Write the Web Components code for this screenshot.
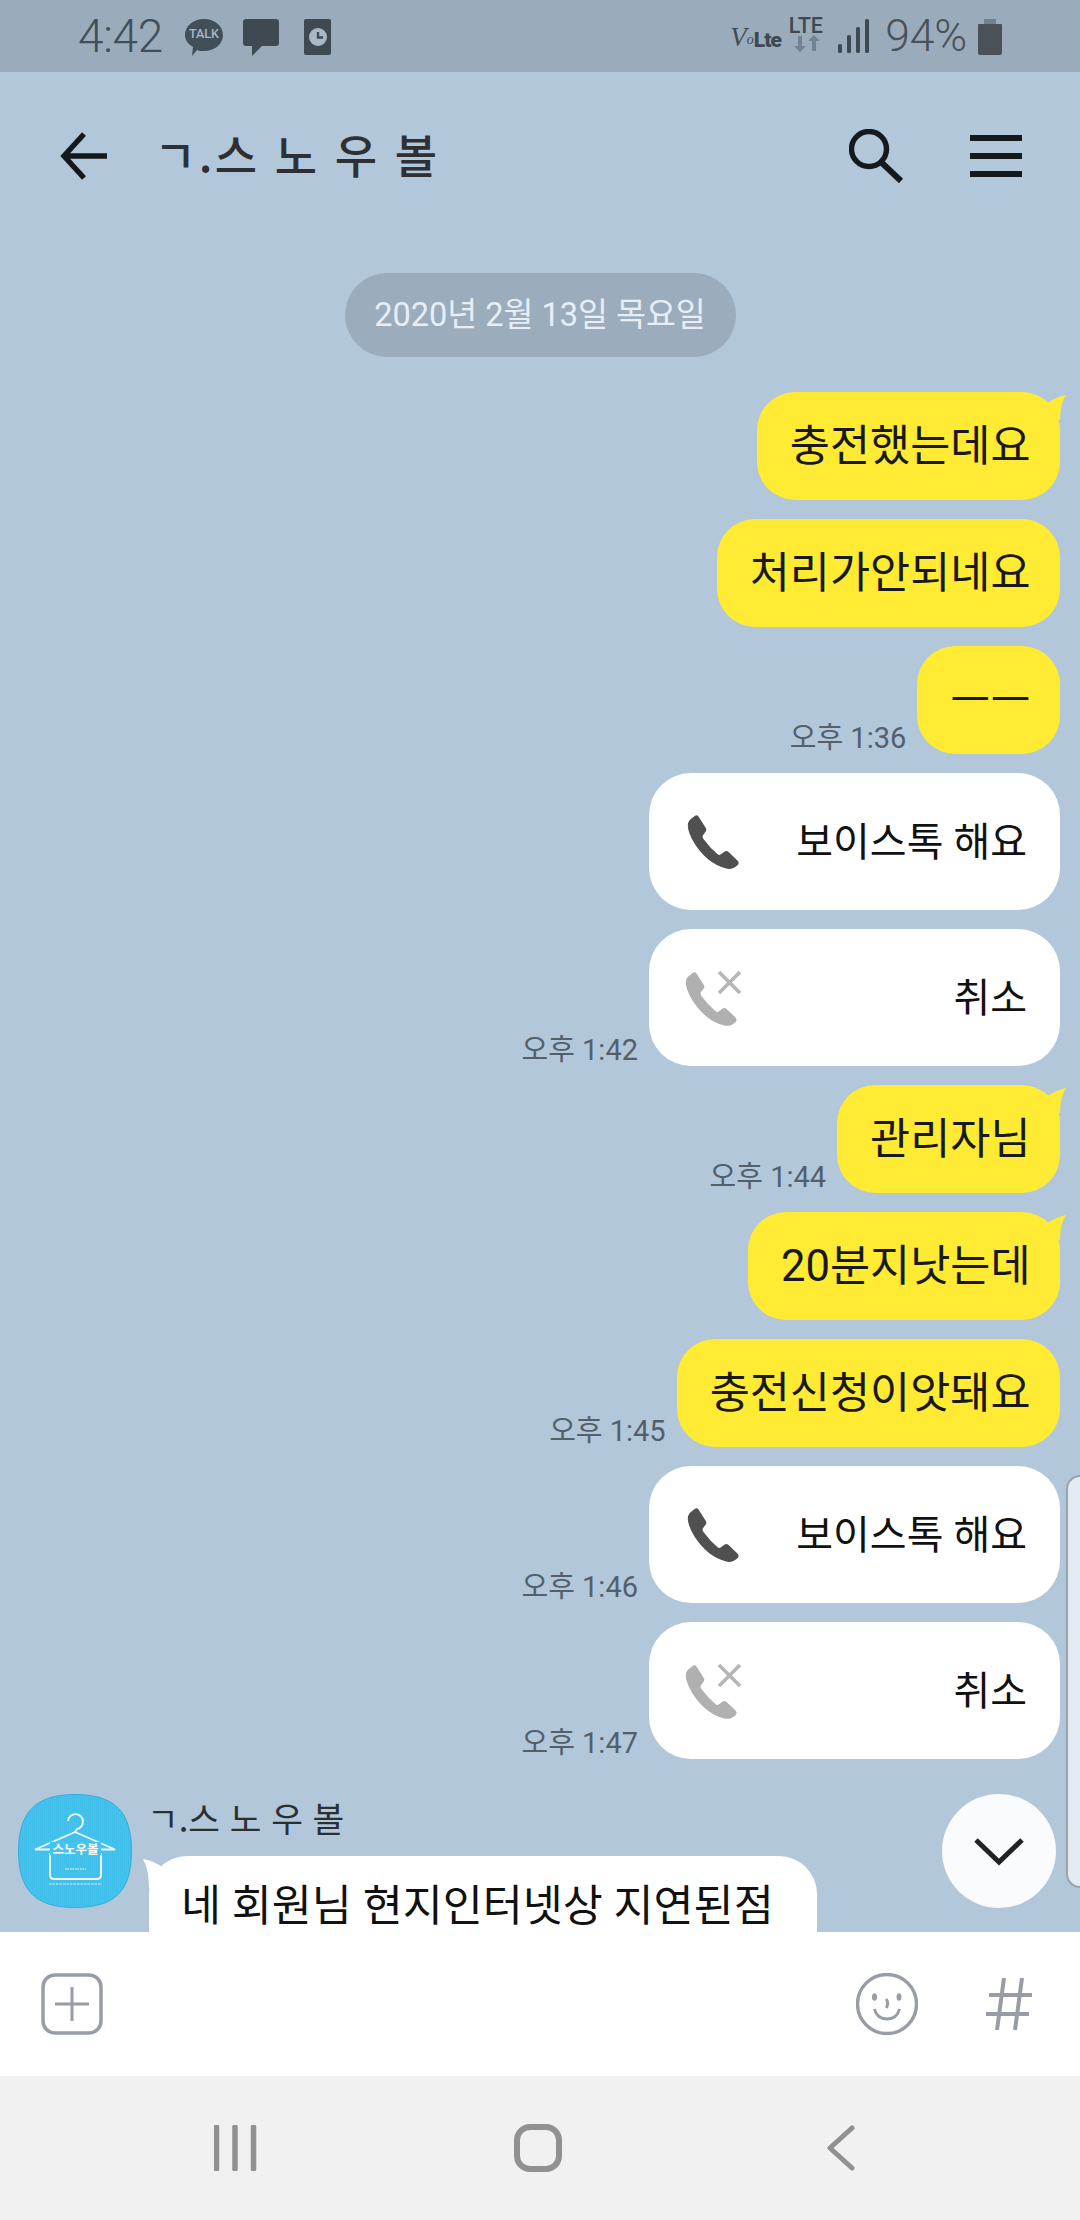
<!DOCTYPE html>
<html lang="ko"><head><meta charset="utf-8"><title>ㄱ.스노우볼</title>
<style>
html,body{margin:0;padding:0;width:1080px;height:2220px;overflow:hidden}
body{font-family:Roboto,"Noto Sans CJK KR",sans-serif;background:#b2c7da}
</style></head><body>
<chat-app>
  <status-bar slot="status"></status-bar>
  <chat-header slot="header" title-text="ㄱ.스 노 우 볼"></chat-header>
  <date-pill slot="date">2020년 2월 13일 목요일</date-pill>
  <chat-bubble tail>충전했는데요</chat-bubble>
  <chat-bubble>처리가안되네요</chat-bubble>
  <chat-bubble time="오후 1:36">ㅡㅡ</chat-bubble>
  <call-bubble kind="voice">보이스톡 해요</call-bubble>
  <call-bubble kind="cancel" time="오후 1:42">취소</call-bubble>
  <chat-bubble tail time="오후 1:44">관리자님</chat-bubble>
  <chat-bubble tail>20분지낫는데</chat-bubble>
  <chat-bubble time="오후 1:45">충전신청이앗돼요</chat-bubble>
  <call-bubble kind="voice" time="오후 1:46">보이스톡 해요</call-bubble>
  <call-bubble kind="cancel" time="오후 1:47">취소</call-bubble>
  <incoming-message name="ㄱ.스 노 우 볼">네 회원님 현지인터넷상 지연된점</incoming-message>
  <scroll-panel slot="overlay"></scroll-panel>
  <scroll-down slot="overlay"></scroll-down>
  <input-bar slot="input"></input-bar>
  <nav-bar slot="nav"></nav-bar>
</chat-app>
<script>
function def(name, html){
  customElements.define(name, class extends HTMLElement{
    connectedCallback(){
      if(this.shadowRoot) return;
      const r=this.attachShadow({mode:'open'});
      r.innerHTML=typeof html==='function'?html(this):html;
    }
  });
}
const PHONE='M24 2Q30-1 35 5L57 40Q60 46 55 51L47 62Q46 68 50 73Q70 100 92 118Q97 122 102 118L112 110Q118 106 124 110L152 137Q158 144 152 150Q135 166 115 160Q60 145 22 85Q-8 35 8 15Z';
const FONT='Roboto,"Noto Sans CJK KR",sans-serif';

def('chat-app',`<style>
:host{display:flex;flex-direction:column;width:1080px;height:2220px;position:relative;overflow:hidden;background:#b2c7da;font-family:${FONT}}
.chat{flex:1;min-height:0;overflow:hidden;position:relative;display:flex;flex-direction:column}
.msgs{display:flex;flex-direction:column;gap:19px;padding:35px 20px 0 18px}
.date{display:flex;justify-content:center;padding-top:33px}
</style>
<slot name="status"></slot>
<div class="chat">
  <slot name="header"></slot>
  <div class="date"><slot name="date"></slot></div>
  <div class="msgs"><slot></slot></div>
  <slot name="overlay"></slot>
</div>
<slot name="input"></slot>
<slot name="nav"></slot>`);

def('status-bar',`<style>
:host{display:flex;align-items:center;height:72px;background:#9aacbc;color:#424f59;padding:0 78px 0 78px;box-sizing:border-box;justify-content:space-between;flex:none}
.g{display:flex;align-items:center}
.t{font:300 46px/72px Roboto,sans-serif;letter-spacing:-.3px}
svg{display:block;overflow:visible}
.pct{font:300 44.5px/72px Roboto,sans-serif;color:#4a5257;margin:0 11px 0 15px;letter-spacing:-.2px}
.talk{position:relative;width:40px;height:38px;margin-left:21px;margin-top:3px}
.talk span{position:absolute;left:0;right:0;top:8px;text-align:center;font:500 12.5px/14px Roboto,sans-serif;color:#a8b8c6}
.volte{display:flex;align-items:flex-end;width:50px;height:26px;color:#3f4951;white-space:nowrap;margin-top:2px}
.v{font:italic 400 27px/26px "Liberation Serif",serif}
.o{font:italic 400 14px/20px "Liberation Serif",serif}
.l{font:900 21px/20px Roboto,sans-serif;letter-spacing:-1px}
.lte{display:flex;flex-direction:column;align-items:center;width:37px;height:40px;margin-left:7px;margin-top:1px}
.lte span{font:500 21.5px/18px Roboto,sans-serif;color:#3f4951}
</style>
<div class="g">
 <span class="t">4:42</span>
 <div class="talk"><svg width="40" height="38" viewBox="0 0 40 38"><path d="M20 0C31 0 39 7 39 16S31 32 20 32C17 32 15 32 13 31L8 37L9 28C4 25 1 21 1 16C1 7 9 0 20 0Z" fill="#424f59"/></svg><span>TALK</span></div>
 <svg width="37" height="38" viewBox="0 0 37 38" style="margin-left:19px;margin-top:3px"><path d="M3 0H33Q36 0 36 3V24Q36 27 33 27H19L9 37V27H3Q0 27 0 24V3Q0 0 3 0Z" fill="#3f4951"/></svg>
 <svg width="28" height="36" viewBox="0 0 28 36" style="margin-left:24px;margin-top:2px"><rect width="27" height="36" rx="2" fill="#3f4951"/><circle cx="14" cy="18" r="9" fill="#a8b8c6"/><path d="M14 13V18.5H19" fill="none" stroke="#3f4951" stroke-width="2.4"/></svg>
</div>
<div class="g">
 <div class="volte"><span class="v">V</span><span class="o">o</span><span class="l">Lte</span></div>
 <div class="lte"><span>LTE</span><svg width="37" height="18" viewBox="0 20 37 18"><path d="M11 21H15V31H19L13 37L7 31H11Z" fill="#718290"/><path d="M25 36H29V26H33L27 20L21 26H25Z" fill="#718290"/></svg></div>
 <svg width="32" height="36" viewBox="0 0 32 36" style="margin-left:14px"><g fill="#3f4951"><rect x="0" y="26" width="4" height="9" rx="1.5"/><rect x="9" y="17" width="4" height="18" rx="1.5"/><rect x="18" y="9" width="4" height="26" rx="1.5"/><rect x="27" y="1" width="4" height="34" rx="1.5"/></g></svg>
 <span class="pct">94%</span>
 <svg width="24" height="36" viewBox="0 0 24 36" style="margin-top:1px"><rect x="6" y="0" width="12" height="6" fill="#718290"/><path d="M1 5H23Q24 5 24 6V34Q24 36 22 36H2Q0 36 0 34V6Q0 5 1 5Z" fill="#4a5257"/></svg>
</div>`);

def('chat-header',h=>`<style>
:host{display:flex;align-items:center;height:168px;flex:none;padding-left:60px;box-sizing:border-box;color:#2e3033}
svg{display:block;flex:none}
.t{font:500 46px/1 "Noto Sans CJK KR",sans-serif;letter-spacing:2.4px;margin-left:46px;flex:1;white-space:pre;position:relative;top:-3px}
.r{display:flex;align-items:center;padding-right:58px}
</style>
<svg width="48" height="48" viewBox="0 0 48 48"><path d="M24 2L4 24L24 46M4 24H47" fill="none" stroke="#16191c" stroke-width="5.4"/></svg>
<div class="t">${h.getAttribute('title-text')}</div>
<div class="r">
<svg width="55" height="54" viewBox="0 0 55 54"><circle cx="20" cy="20" r="17.5" fill="none" stroke="#16191c" stroke-width="5.4"/><path d="M32 33L52 52" stroke="#16191c" stroke-width="6" fill="none"/></svg>
<svg width="52" height="42" viewBox="0 0 52 42" style="margin-left:66px"><path d="M0 3H52M0 21H52M0 39H52" stroke="#16191c" stroke-width="6"/></svg>
</div>`);

def('date-pill',`<style>
:host{display:flex;align-items:center;justify-content:center;width:391px;height:84px;border-radius:42px;background:#9badbc;color:#e8eef5;font:400 32.5px/1 ${FONT};box-sizing:border-box;white-space:nowrap}
</style><slot></slot>`);

const timeEl=h=>h.getAttribute('time')?`<span class="time">${h.getAttribute('time')}</span>`:'';
const rowCss=`:host{display:flex;justify-content:flex-end;align-items:flex-end;gap:11px}
.time{font:400 29px/32px ${FONT};color:#53606c;white-space:nowrap}`;

def('chat-bubble',h=>`<style>${rowCss}
.b{position:relative;height:108px;box-sizing:border-box;padding:2px 29.5px 0 33px;border-radius:38px;background:#ffeb33;color:#191919;display:flex;align-items:center;font:400 43.6px/1 ${FONT};white-space:nowrap}
.b svg{position:absolute;left:100%;margin-left:-20px;top:0}
</style>${timeEl(h)}<div class="b"><slot></slot>${h.hasAttribute('tail')?'<svg width="28" height="30" viewBox="0 0 28 30"><path d="M6 12Q16 5 26 3Q20 12 20 28L6 28Z" fill="#ffeb33"/></svg>':''}</div>`);

def('call-bubble',h=>{
 const cancel=h.getAttribute('kind')==='cancel';
 const icon=cancel
  ?`<svg width="58" height="56" viewBox="0 0 58 56"><path transform="translate(0 2) scale(.333)" d="${PHONE}" fill="#b0b0b0"/><path d="M34 2L55 23M55 2L34 23" stroke="#b6b6b6" stroke-width="3.6" fill="none"/></svg>`
  :`<svg width="52" height="54" viewBox="0 0 156 162"><path d="${PHONE}" fill="#505050"/></svg>`;
 return `<style>${rowCss}
.b{width:411px;height:137px;box-sizing:border-box;border-radius:42px;background:#fff;color:#111;display:flex;align-items:center;justify-content:space-between;padding:0 33px 0 ${cancel?36:38}px;font:400 40px/1 ${FONT};white-space:nowrap}
.b span{padding-top:2px}
svg{display:block;flex:none}
</style>${timeEl(h)}<div class="b">${icon}<span><slot></slot></span></div>`;
});

def('incoming-message',h=>`<style>
:host{display:flex;margin:16px 0 0 0;gap:17px;align-items:flex-start}
svg{display:block;flex:none}
.c{display:flex;flex-direction:column;min-width:0}
.n{height:62px;font:400 34.5px/47px "Noto Sans CJK KR",sans-serif;color:#2a2f34;white-space:pre;margin-left:-2px}
.wrap{position:relative;width:668px}
.b{background:#fff;border-radius:38px;padding:24px 32px 40px;color:#111;font:400 43.5px/54px ${FONT};white-space:nowrap}
.tail{position:absolute;left:-8px;top:0}
</style>
<svg width="114" height="114" viewBox="0 0 114 114"><defs><pattern id="st" width="2" height="4" patternUnits="userSpaceOnUse"><rect width="1" height="4" fill="#3bb6e6"/></pattern></defs><path d="M57 .5C97 .5 113.500 18 113.500 57C113.500 97 97 113.500 57 113.500C18 113.500 .5 97 .5 57C.5 18 18 .5 57 .5Z" fill="#43c4ee" stroke="#33aed9"/><path d="M57 1C97 1 113 18 113 57C113 97 97 113 57 113C18 113 1 97 1 57C1 18 18 1 57 1Z" fill="url(#st)" opacity=".35"/>
<g fill="none" stroke="#eefaff" stroke-width="1.900"><path d="M50 27A7.500 7.500 0 1 1 59 35L57 38L17 55.500H32M57 38L97 55.500H82"/><path d="M32 59V81Q32 85 36 85H79Q83 85 83 81V59"/></g>
<rect x="32" y="48" width="51" height="13" fill="#43c4ee"/>
<text x="57.500" y="60" text-anchor="middle" font-family="'Noto Sans CJK KR',sans-serif" font-weight="700" font-size="12.500" fill="#fff">스노우볼</text>
<path d="M47 75H68" stroke="#c8effb" stroke-width="1.400" stroke-dasharray="1.500 1"/><path d="M31 90H84" stroke="#bcebfa" stroke-width="1.500" stroke-dasharray="2.500 1" opacity=".8"/></svg>
<div class="c"><div class="n">${h.getAttribute('name')}</div>
<div class="wrap"><svg class="tail" width="24" height="32" viewBox="0 0 24 32"><path d="M2 3Q13 5 21 11L21 32L8 32Q8 14 2 3Z" fill="#fff"/></svg><div class="b"><slot></slot></div></div></div>`);

def('scroll-panel',`<style>
:host{position:absolute;right:0;top:1403px;width:14px;height:413px;box-sizing:border-box;background:#e4ebf3;border:2px solid #98a4af;border-right:0;border-radius:14px 0 0 14px}
</style>`);
def('scroll-down',`<style>
:host{position:absolute;left:942px;top:1722px;width:114px;height:114px;border-radius:50%;background:#f9fbfd;display:flex;align-items:center;justify-content:center}
svg{display:block;margin-top:2px}
</style><svg width="50" height="30" viewBox="0 0 50 30"><path d="M2 3L25 25L48 3" fill="none" stroke="#222" stroke-width="5"/></svg>`);

def('input-bar',`<style>
:host{display:flex;align-items:center;height:144px;background:#fff;flex:none;padding:0 48px 0 41px;box-sizing:border-box}
svg{display:block;flex:none}
.sp{flex:1}
</style>
<svg width="62" height="62" viewBox="0 0 62 62"><rect x="2" y="2" width="58" height="58" rx="12" fill="none" stroke="#979ca5" stroke-width="3.500"/><path d="M31 14V48M14 31H48" stroke="#979ca5" stroke-width="3" fill="none"/></svg>
<div class="sp"></div>
<svg width="62" height="62" viewBox="0 0 62 62"><circle cx="31" cy="31" r="29.500" fill="none" stroke="#979ca5" stroke-width="3.400"/><g fill="#979ca5"><ellipse cx="18.500" cy="24" rx="2.500" ry="3.800"/><ellipse cx="43" cy="24" rx="2.500" ry="3.800"/></g><path d="M30 26Q33 29 30.500 35M18.500 36Q21 46 31 46Q41 46 43.500 36" fill="none" stroke="#979ca5" stroke-width="3"/></svg>
<svg width="46" height="52" viewBox="0 0 46 52" style="margin-left:68px"><path d="M18 0L11 52M36 0L29 52M3 17H46M0 36H43" stroke="#979ca5" stroke-width="4" fill="none"/></svg>`);

def('nav-bar',`<style>
:host{display:flex;align-items:center;height:144px;background:#f1f1f1;flex:none}
svg{display:block;margin-top:-1px}
</style>
<svg width="44" height="46" viewBox="0 0 44 46" style="margin-left:214px"><path d="M2.500 2V44M21 2V44M39.500 2V44" stroke="#919191" stroke-width="5.500" stroke-linecap="round" fill="none"/></svg>
<svg width="48" height="48" viewBox="0 0 48 48" style="margin-left:256px"><rect x="3" y="3" width="42" height="42" rx="13" fill="none" stroke="#919191" stroke-width="6"/></svg>
<svg width="30" height="46" viewBox="0 0 30 46" style="margin-left:264px"><path d="M26 3L4 23L26 43" fill="none" stroke="#919191" stroke-width="5" stroke-linecap="round" stroke-linejoin="round"/></svg>`);
</script>
</body></html>
